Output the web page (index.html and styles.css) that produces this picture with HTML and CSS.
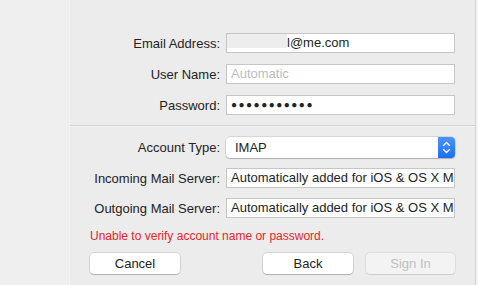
FILE: index.html
```html
<!DOCTYPE html>
<html lang="en">
<head>
    <meta charset="UTF-8">
    <title>Add Account | Mail</title>
    <link rel="stylesheet" href="styles.css">
</head>
<body>
    <div class="window">
        <div class="sidebar"></div>

        <div class="sheet">
            <div class="form-grid">
                <label class="form-label">Email Address:</label>
                <div class="field"><span class="masked"></span>l@me.com</div>

                <label class="form-label">User Name:</label>
                <div class="field placeholder">Automatic</div>

                <label class="form-label">Password:</label>
                <div class="field dots">●●●●●●●●●●●</div>
            </div>

            <div class="divider"></div>

            <div class="form-grid server-grid">
                <label class="form-label">Account Type:</label>
                <div class="popup">
                    <span>IMAP</span>
                    <span class="stepper">
                        <svg width="9" height="13" viewBox="0 0 9 13" fill="none" stroke="#fff" stroke-width="1.4" stroke-linecap="round" stroke-linejoin="round">
                            <path d="M1.5 4.5 4.5 1.5 7.5 4.5"></path>
                            <path d="M1.5 8.5 4.5 11.5 7.5 8.5"></path>
                        </svg>
                    </span>
                </div>

                <label class="form-label">Incoming Mail Server:</label>
                <div class="field">Automatically added for iOS &amp; OS X Mail</div>

                <label class="form-label">Outgoing Mail Server:</label>
                <div class="field">Automatically added for iOS &amp; OS X Mail</div>
            </div>

            <p class="error">Unable to verify account name or password.</p>

            <div class="button-row">
                <button class="btn">Cancel</button>
                <div class="right-buttons">
                    <button class="btn">Back</button>
                    <button class="btn disabled">Sign In</button>
                </div>
            </div>
        </div>

        <div class="edge"></div>
    </div>
</body>
</html>
```

FILE: styles.css
```css
:root {
    --panel-bg: #ececec;
    --side-bg: #efefef;
    --text-color: #232323;
    --field-border: #c6c6c6;
    --placeholder: #bdbdbd;
    --error-color: #e5242b;
    --blue-top: #4c94fb;
    --blue-bottom: #1b6ff5;
}

* {
    box-sizing: border-box;
}

body {
    margin: 0;
    font-family: 'Liberation Sans', Arial, sans-serif;
    font-size: 13px;
    color: var(--text-color);
    background-color: var(--side-bg);
}

.window {
    display: flex;
    height: 285px;
    overflow: hidden;
}

.sidebar {
    width: 70px;
    background-color: var(--side-bg);
    border-right: 1px solid #f4f4f4;
}

.sheet {
    width: 405px;
    background-color: var(--panel-bg);
    padding-top: 33px;
}

.edge {
    width: 3px;
    border-left: 1px solid #d2d2d2;
    background-color: #f3f3f3;
}

.form-grid {
    display: grid;
    grid-template-columns: 150px 229px;
    column-gap: 6px;
    row-gap: 11px;
    align-items: center;
}

.form-label {
    text-align: right;
    white-space: nowrap;
}

.field {
    height: 20px;
    line-height: 18px;
    background-color: #fff;
    border: 1px solid var(--field-border);
    padding-left: 4px;
    white-space: nowrap;
    overflow: hidden;
    display: flex;
    align-items: center;
}

.field.placeholder {
    color: var(--placeholder);
}

.masked {
    display: inline-block;
    width: 60px;
    height: 16px;
    margin-left: -4px;
    margin-top: -2px;
    background-color: #ededed;
    align-self: flex-start;
}

.dots {
    font-size: 10px;
    letter-spacing: 1.5px;
    padding-left: 4px;
}

.divider {
    height: 1px;
    background-color: #d3d3d3;
    margin-top: 10px;
    margin-bottom: 11px;
    box-shadow: 0 1px 0 #f4f4f4;
}

.server-grid {
    row-gap: 10px;
}

.popup {
    height: 21px;
    display: flex;
    align-items: center;
    justify-content: space-between;
    background-color: #fff;
    border-radius: 4px;
    padding-left: 9px;
    box-shadow: 0 0 0 0.5px rgba(0, 0, 0, 0.18), 0 1px 1px rgba(0, 0, 0, 0.18);
}

.stepper {
    width: 17px;
    height: 21px;
    display: flex;
    align-items: center;
    justify-content: center;
    border-radius: 0 4px 4px 0;
    background: linear-gradient(var(--blue-top), var(--blue-bottom));
}

.error {
    margin: 11px 0 0 20px;
    font-size: 12px;
    line-height: 14px;
    color: var(--error-color);
}

.button-row {
    display: flex;
    justify-content: space-between;
    margin: 10px 20px 0 20px;
}

.right-buttons {
    display: flex;
    gap: 13px;
}

.btn {
    width: 90px;
    height: 21px;
    padding: 0;
    border: none;
    border-radius: 4px;
    background-color: #fff;
    font-family: 'Liberation Sans', Arial, sans-serif;
    font-size: 13px;
    color: var(--text-color);
    box-shadow: 0 0 0 0.5px rgba(0, 0, 0, 0.2), 0 1px 1px rgba(0, 0, 0, 0.16);
}

.btn.disabled {
    width: 89px;
    background-color: #f3f3f3;
    color: #c0c0c0;
    box-shadow: 0 0 0 0.5px rgba(0, 0, 0, 0.12), 0 1px 1px rgba(0, 0, 0, 0.08);
}
```
